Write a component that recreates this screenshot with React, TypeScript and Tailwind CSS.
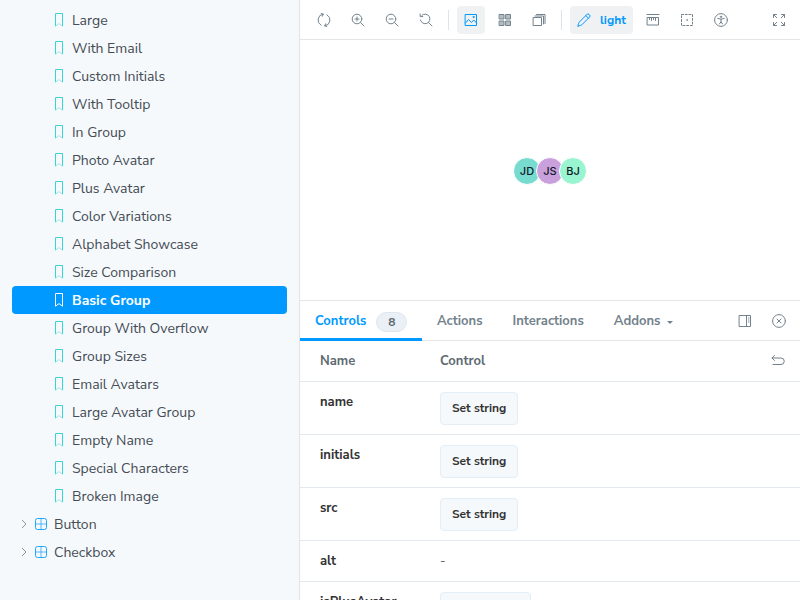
import type { ReactNode } from "react";

const stories = [
  "Large",
  "With Email",
  "Custom Initials",
  "With Tooltip",
  "In Group",
  "Photo Avatar",
  "Plus Avatar",
  "Color Variations",
  "Alphabet Showcase",
  "Size Comparison",
  "Basic Group",
  "Group With Overflow",
  "Group Sizes",
  "Email Avatars",
  "Large Avatar Group",
  "Empty Name",
  "Special Characters",
  "Broken Image",
];

function Bookmark({ active }: { active: boolean }) {
  return (
    <svg width="14" height="14" viewBox="0 0 14 14" fill="none" className="shrink-0">
      <path
        d="M3.500 13.200V.5h7v12.700"
        stroke={active ? "#ffffff" : "#37d5d3"}
        strokeWidth="1"
      />
      <path d="M3.500 13.200 7 10.600l3.500 2.600" stroke={active ? "#ffffff" : "#9eeae9"} strokeWidth="1" />
    </svg>
  );
}

function ComponentIcon() {
  return (
    <svg width="14" height="14" viewBox="0 0 14 14" fill="none" className="shrink-0">
      <rect x="1.500" y="1.500" width="11" height="11" rx="2" stroke="#1ea7fd" strokeWidth="1" />
      <path d="M7 1.500v11M1.500 7h11" stroke="#1ea7fd" strokeWidth="1" opacity="0.75" />
    </svg>
  );
}

function Chevron() {
  return (
    <svg width="8" height="10" viewBox="0 0 8 10" fill="none" className="shrink-0">
      <path d="M2 1l4 4-4 4" stroke="#8c959c" strokeWidth="1" />
    </svg>
  );
}

function ToolIcon({ children, blue }: { children: ReactNode; blue?: boolean }) {
  return (
    <svg
      width="14"
      height="14"
      viewBox="0 0 14 14"
      fill="none"
      stroke={blue ? "#0099ff" : "#73828c"}
      strokeWidth="1"
      strokeLinecap="round"
      strokeLinejoin="round"
    >
      {children}
    </svg>
  );
}

function ToolBtn({ children, className }: { children: ReactNode; className?: string }) {
  return (
    <div className={`flex h-7 w-7 items-center justify-center rounded ${className ?? ""}`}>
      {children}
    </div>
  );
}

function Toolbar() {
  return (
    <div className="flex h-10 shrink-0 items-center border-b border-[#e3e6e8] pl-[10px] pr-[7px]">
      <div className="flex items-center gap-[6px]">
        <ToolBtn>
          <ToolIcon>
            <path d="M4 12.200A6 6 0 0 1 6 1.100M10 1.800A6 6 0 0 1 8 12.900" />
            <path d="M4.200 .6 6.400 1.200 5.400 3.200M9.800 13.400 7.600 12.800 8.600 10.800" />
          </ToolIcon>
        </ToolBtn>
        <ToolBtn>
          <ToolIcon>
            <circle cx="6" cy="6" r="4.800" />
            <path d="M9.600 9.600 13 13M6 4v4M4 6h4" />
          </ToolIcon>
        </ToolBtn>
        <ToolBtn>
          <ToolIcon>
            <circle cx="6" cy="6" r="4.800" />
            <path d="M9.600 9.600 13 13M4 6h4" />
          </ToolIcon>
        </ToolBtn>
        <ToolBtn>
          <ToolIcon>
            <path d="M3 2.200A4.800 4.800 0 1 1 1.400 7" />
            <path d="M1.200 1v2.600h2.600M9.600 9.600 13 13" />
          </ToolIcon>
        </ToolBtn>
      </div>
      <div className="mx-[8px] h-5 w-px bg-[#dfe3e6]" />
      <div className="flex items-center gap-[6px]">
        <ToolBtn className="bg-[#eff1f3]">
          <ToolIcon blue>
            <rect x="1.500" y="1.500" width="11" height="11" />
            <path d="M1.500 10 4.500 6.500 7.500 9.500 9.800 7l2.700 3" />
            <circle cx="9.500" cy="4" r="0.600" />
          </ToolIcon>
        </ToolBtn>
        <ToolBtn>
          <ToolIcon>
            <rect x="1.500" y="1.500" width="4.500" height="4.500" fill="#b4bdc3" />
            <rect x="8" y="1.500" width="4.500" height="4.500" fill="#b4bdc3" />
            <rect x="1.500" y="8" width="4.500" height="4.500" fill="#b4bdc3" />
            <rect x="8" y="8" width="4.500" height="4.500" fill="#b4bdc3" />
          </ToolIcon>
        </ToolBtn>
        <ToolBtn>
          <ToolIcon>
            <rect x="1.500" y="4.500" width="8" height="8" />
            <path d="M3 3h8.500v8M4.500 1.500h8.500v9" />
          </ToolIcon>
        </ToolBtn>
      </div>
      <div className="mx-[8px] h-5 w-px bg-[#dfe3e6]" />
      <div className="flex h-7 w-[63px] items-center gap-[9px] rounded bg-[#eff1f3] pl-[7px]">
        <ToolIcon blue>
          <path d="M1 13c.3-2 .6-3.200 1.200-3.800L10 1.400a1.400 1.400 0 0 1 2 0l.6.6a1.400 1.400 0 0 1 0 2L4.800 11.800C4.200 12.400 3 12.700 1 13Z" />
          <path d="M8.800 2.600l2.600 2.600" />
        </ToolIcon>
        <span className="text-[12px] font-bold text-[#0099ff]">light</span>
      </div>
      <div className="ml-[6px] flex items-center gap-[6px]">
        <ToolBtn>
          <ToolIcon>
            <path d="M1 1.500h12" />
            <rect x="1.500" y="4.500" width="11" height="7.500" />
            <path d="M3.500 4.500v2M5.500 4.500v3M7.500 4.500v2M9.500 4.500v3" />
          </ToolIcon>
        </ToolBtn>
        <ToolBtn>
          <ToolIcon>
            <rect x="1.500" y="1.500" width="11" height="11" strokeDasharray="2 1.700" />
            <circle cx="7" cy="7" r="0.300" />
          </ToolIcon>
        </ToolBtn>
        <ToolBtn>
          <ToolIcon>
            <circle cx="7" cy="7" r="6.400" />
            <circle cx="7" cy="3.800" r="0.700" />
            <path d="M3.800 5.400 7 6.200l3.200-.8M7 6.200v2.600M5.400 11 7 8.800 8.600 11" />
          </ToolIcon>
        </ToolBtn>
      </div>
      <div className="ml-auto">
        <ToolBtn>
          <ToolIcon>
            <path d="M1.500 4.500v-3h3M12.500 4.500v-3h-3M1.500 9.500v3h3M12.500 9.500v3h-3M1.500 1.500l3.300 3.300M12.500 1.500 9.200 4.800M1.500 12.500l3.300-3.300M12.500 12.500 9.200 9.200" />
          </ToolIcon>
        </ToolBtn>
      </div>
    </div>
  );
}

function Avatar({ label, color, first }: { label: string; color: string; first?: boolean }) {
  return (
    <div
      className={`flex h-7 w-7 items-center justify-center rounded-full border-[1px] border-white font-['Inter',sans-serif] text-[11px] font-medium text-[#111827] ${color} ${first ? "" : "-ml-[5px]"}`}
    >
      {label}
    </div>
  );
}

function SetButton({ label }: { label: string }) {
  return (
    <div className="inline-flex h-[33px] items-center rounded border border-[#e3eef7] bg-[#f6f9fc] px-[11px] pb-[2px] text-[12px] font-bold text-[#333333]">
      {label}
    </div>
  );
}

function ArgRow({ name, value, height }: { name: string; value: ReactNode; height: string }) {
  return (
    <div className={`flex shrink-0 border-b border-[#e3e9ee] pl-5 ${height}`}>
      <div className="w-[120px] shrink-0 pt-[10px] text-[13px] font-bold leading-[20px] text-[#333333]">
        {name}
      </div>
      <div className="pt-[10px]">{value}</div>
    </div>
  );
}

export default function App() {
  return (
    <div className="flex h-screen w-full overflow-hidden bg-white font-['Nunito_Sans','Noto_Sans',sans-serif]">
      <aside className="h-full w-[300px] shrink-0 overflow-hidden border-r border-[#dfe5ea] bg-[#f6f9fc] pl-3 pr-3 pt-[6px] text-[14px] text-[#444c55]">
        {stories.map((story) => {
          const active = story === "Basic Group";
          return (
            <div
              key={story}
              className={`flex h-7 items-center gap-[6px] rounded pl-[40px] ${active ? "bg-[#0099ff] font-bold text-white" : ""}`}
            >
              <Bookmark active={active} />
              <span className="whitespace-nowrap">{story}</span>
            </div>
          );
        })}
        {["Button", "Checkbox"].map((name) => (
          <div key={name} className="flex h-7 items-center pl-2">
            <Chevron />
            <span className="ml-[6px]">
              <ComponentIcon />
            </span>
            <span className="ml-[6px]">{name}</span>
          </div>
        ))}
      </aside>
      <main className="flex h-full min-w-0 flex-1 flex-col">
        <Toolbar />
        <div className="flex h-[260px] shrink-0 items-center justify-center pt-[2px]">
          <div className="flex items-center">
            <Avatar label="JD" color="bg-[#78dbd0]" first />
            <Avatar label="JS" color="bg-[#c9a0dc]" />
            <Avatar label="BJ" color="bg-[#98f5d0]" />
          </div>
        </div>
        <div className="flex min-h-0 flex-1 flex-col border-t border-[#e3e6e8]">
          <div className="flex h-10 shrink-0 items-stretch border-b border-[#e3e6e8] text-[13px] font-bold text-[#73828c]">
            <div className="-mb-px flex w-[122px] items-center border-b-[3px] border-[#0099ff] pl-[15px] pt-[4px] text-[#0099ff]">
              Controls
              <span className="ml-[10px] flex h-[20px] w-[31px] items-center justify-center rounded-full border border-[#dfe7ee] bg-[#eaf0f6] text-[12px] text-[#5c6870]">
                8
              </span>
            </div>
            <div className="flex items-center pl-[15px] pr-[15px] pt-[2px]">Actions</div>
            <div className="flex items-center pl-[15px] pr-[15px] pt-[2px]">Interactions</div>
            <div className="flex items-center gap-[7px] pl-[15px] pt-[2px]">
              Addons
              <span className="mt-px h-0 w-0 border-x-[3.500px] border-t-[3.500px] border-x-transparent border-t-[#73828c]" />
            </div>
            <div className="ml-auto flex items-center gap-[20px] pr-[14px]">
              <ToolIcon>
                <rect x="1.500" y="1.500" width="11" height="11" />
                <path d="M8.500 1.500v11M10.500 4h.5M10.500 6h.5M10.500 8h.5" />
              </ToolIcon>
              <ToolIcon>
                <circle cx="7" cy="7" r="6.400" />
                <path d="M5 5l4 4M9 5 5 9" />
              </ToolIcon>
            </div>
          </div>
          <div className="flex h-[41px] shrink-0 items-center border-b border-[#e3e9ee] pl-5 pr-[15px] pt-[2px] text-[13px] font-bold text-[#5e6a72]">
            <div className="w-[120px]">Name</div>
            <div>Control</div>
            <div className="ml-auto -mt-[2px]">
              <ToolIcon>
                <path d="M3.500 1.500 1 4l2.500 2.500M1 4h9a3 3 0 0 1 0 6.500H2" />
              </ToolIcon>
            </div>
          </div>
          <ArgRow name="name" height="h-[53px]" value={<SetButton label="Set string" />} />
          <ArgRow name="initials" height="h-[53px]" value={<SetButton label="Set string" />} />
          <ArgRow name="src" height="h-[53px]" value={<SetButton label="Set string" />} />
          <ArgRow
            name="alt"
            height="h-[41px]"
            value={<span className="block text-[13px] leading-[20px] text-[#5c6870]">-</span>}
          />
          <ArgRow name="isPlusAvatar" height="h-[53px]" value={<SetButton label="Set boolean" />} />
        </div>
      </main>
    </div>
  );
}
